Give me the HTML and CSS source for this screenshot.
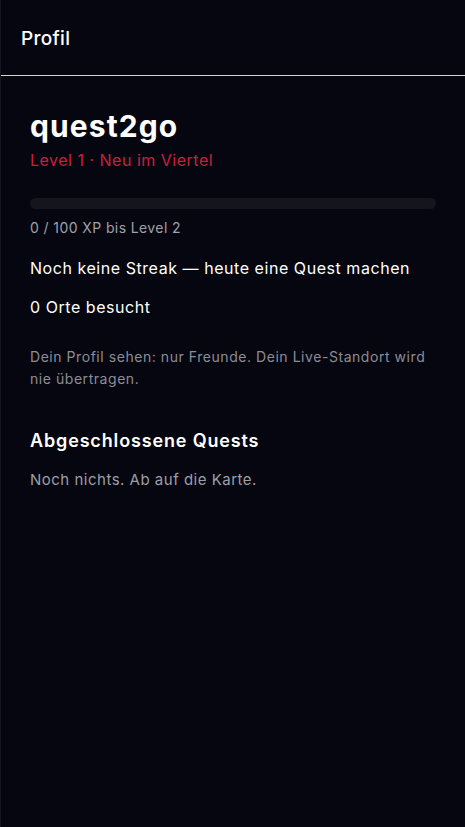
FILE: index.html
```html
<!DOCTYPE html>
<html lang="de">
<head>
  <meta charset="UTF-8" />
  <meta name="viewport" content="width=device-width, initial-scale=1" />
  <title>Profil</title>
  <link rel="stylesheet" href="styles.css">
</head>
<body>
  <header class="topbar">
    <h1>Profil</h1>
  </header>

  <main class="profile">
    <h2 class="name">quest2go</h2>
    <p class="level">Level 1 · Neu im Viertel</p>

    <div class="xp">
      <div class="xp-bar"><div class="xp-fill" style="width: 0%"></div></div>
      <p class="xp-label">0 / 100 XP bis Level 2</p>
    </div>

    <p class="stat">Noch keine Streak — heute eine Quest machen</p>
    <p class="stat">0 Orte besucht</p>

    <p class="note">Dein Profil sehen: nur Freunde. Dein Live-Standort wird nie übertragen.</p>

    <section class="done">
      <h3>Abgeschlossene Quests</h3>
      <p class="empty">Noch nichts. Ab auf die Karte.</p>
    </section>
  </main>
</body>
</html>
```

FILE: styles.css
```css
/* Base */
* {
  box-sizing: border-box;
}
body {
  margin: 0;
  min-height: 100vh;
  background: #05060f;
  color: #fff;
  font-family: Inter, "Noto Sans", sans-serif;
  border-left: 1px solid #15161d;
}
p, h1, h2, h3 {
  margin: 0;
}

/* Top bar */
.topbar {
  height: 76px;
  display: flex;
  align-items: center;
  padding: 0 20px;
  border-bottom: 1px solid #d4d4d8;
}
.topbar h1 {
  font-size: 19px;
  font-weight: 500;
  letter-spacing: 0.3px;
  margin-top: 2px;
}

/* Profile */
.profile {
  padding: 32px 29px 0 29px;
}
.name {
  font-size: 30px;
  font-weight: 700;
  line-height: 36px;
  letter-spacing: 1.1px;
}
.level {
  color: #c8203f;
  font-size: 16px;
  line-height: 24px;
  letter-spacing: 0.5px;
  margin-top: 4px;
}

.xp {
  margin-top: 26px;
}
.xp-bar {
  height: 11px;
  border-radius: 6px;
  background: #16151d;
  overflow: hidden;
}
.xp-fill {
  height: 100%;
  background: #c8203f;
}
.xp-label {
  color: #a1a1aa;
  font-size: 14px;
  line-height: 20px;
  letter-spacing: 0.4px;
  margin-top: 9px;
}

.stat {
  font-size: 16px;
  line-height: 24px;
  letter-spacing: 0.55px;
  margin-top: 18px;
}
.stat + .stat {
  margin-top: 15px;
}

.note {
  color: #8e8d96;
  font-size: 14px;
  line-height: 22px;
  letter-spacing: 0.55px;
  margin-top: 27px;
}

/* Completed quests */
.done {
  margin-top: 38px;
}
.done h3 {
  font-size: 18px;
  font-weight: 600;
  line-height: 26px;
  letter-spacing: 0.85px;
}
.empty {
  color: #9e9ea7;
  font-size: 15px;
  line-height: 22px;
  letter-spacing: 0.5px;
  margin-top: 15px;
}
```
